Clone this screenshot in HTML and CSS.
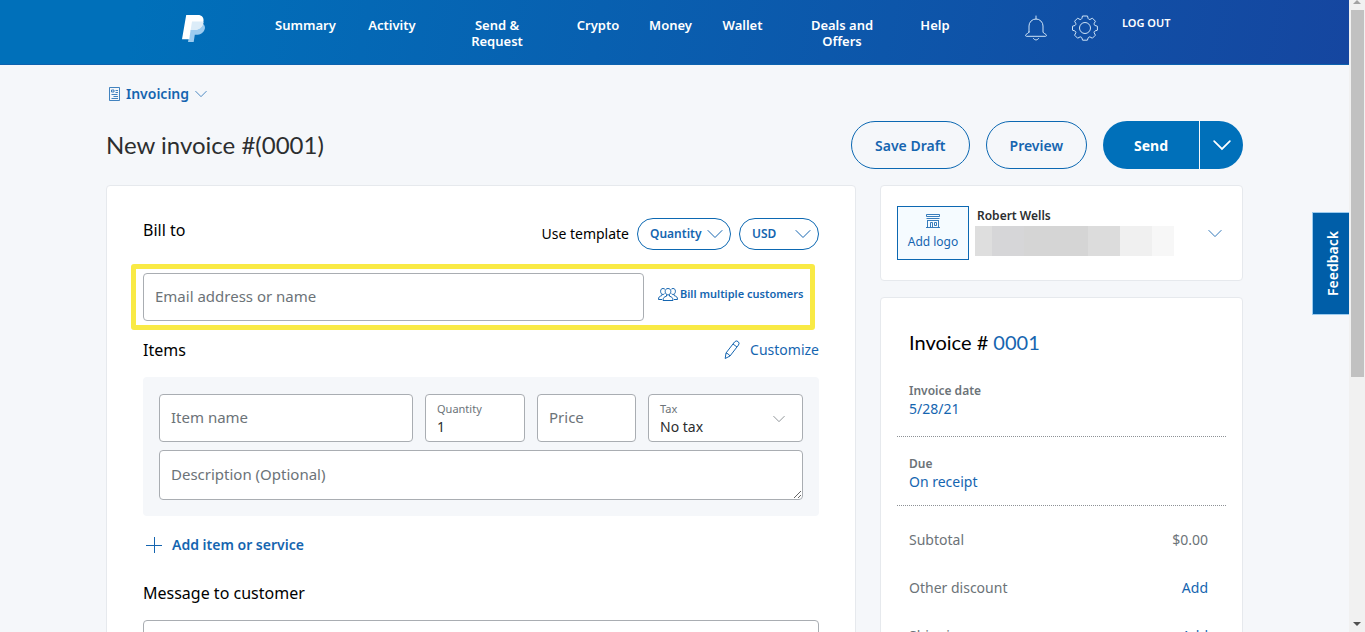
FILE: index.html
```html
<!DOCTYPE html>
<html lang="en">
<head>
<meta charset="utf-8">
<meta name="viewport" content="width=device-width, initial-scale=1">
<title>New invoice</title>
<link rel="stylesheet" href="styles.css">
</head>
<body>
<svg class="defs" aria-hidden="true">
  <symbol id="chevron" viewBox="0 0 16 10"><path d="M1 1.500 8 8.500 15 1.500" fill="none" stroke="currentColor" stroke-linecap="round"/></symbol>
</svg>
<div class="page">
  <header class="topbar">
    <div class="topbar-inner">
      <a class="logo" href="#" aria-label="PayPal">
        <svg width="24" height="28" viewBox="0 0 24 28">
          <path d="M9.500 7.500h8.500q5 1 5 5.500c-1 5-4.500 6.800-9 6.800h-1.200L11.700 27H6z" fill="#9bcbf0"/>
          <path d="M4.200 0h11.600c4.200 0 6.200 2.600 5.700 6.300-.9 6-4.600 8.700-9.800 8.700H8.600L7.300 24.300H0z" fill="#fff"/>
          <path d="M10 6.500h10.500c.5.200.9.500 1.100 1-1 5-4.500 7.500-9.900 7.500H8.700z" fill="#dcecf8"/>
        </svg>
      </a>
      <nav class="nav" aria-label="Main">
        <a href="#">Summary</a>
        <a href="#">Activity</a>
        <a href="#">Send &amp;<br>Request</a>
        <a href="#">Crypto</a>
        <a href="#">Money</a>
        <a href="#">Wallet</a>
        <a href="#">Deals and<br>Offers</a>
        <a href="#">Help</a>
      </nav>
      <div class="tools">
        <button class="icon-button" aria-label="Notifications">
          <svg width="24" height="26" viewBox="0 0 24 26" fill="none" stroke="currentColor" stroke-linecap="round" stroke-linejoin="round">
            <path d="M12 1v3M5 17V11a7 7 0 0 1 14 0v6c0 1.500 3.500 1.800 3.500 3.500 0 .5-.5.8-1 .8h-19c-.5 0-1-.3-1-.8C1.500 18.800 5 18.500 5 17zM9.500 23.500c.7 2 4.300 2 5 0"/>
          </svg>
        </button>
        <button class="icon-button" aria-label="Settings">
          <svg width="26" height="26" viewBox="0 0 26 26" fill="none" stroke="currentColor" stroke-linejoin="round">
            <circle cx="13" cy="13" r="5.500"/>
            <path d="M10.500 1h5l.7 2.600q.4.900 1.700.9l2.500-1.300 3 3-1.300 2.500q-.2 1.300.9 1.800l2.400.7v4l-2.500.8q-1 .6-.8 1.700l1.300 2.500-3 3-2.500-1.300q-1.200-.1-1.700.9l-.8 2.400h-4.800l-.8-2.500q-.6-1-1.700-.8l-2.500 1.300-3-3 1.300-2.500q.1-1.200-.9-1.700l-2.500-.8v-4l2.500-.7q1-.6.900-1.800L2.600 6.200l3-3 2.500 1.300q1.200.1 1.700-.9z"/>
          </svg>
        </button>
        <a class="logout" href="#">LOG OUT</a>
      </div>
    </div>
  </header>

  <main class="content">
    <button class="crumb">
      <svg class="doc" width="11" height="14" viewBox="0 0 11 14" fill="none" stroke="currentColor">
        <path d="M.5.5h10v13H.5zM2.500 3h2.500v2H2.500zM6.500 3.500h2.500M6.500 5.500h2.500M2.500 7.500h6M4.500 9.500h4.500M2.500 11.500h6.500"/>
      </svg>
      <span>Invoicing</span>
      <svg width="12" height="8"><use href="#chevron"/></svg>
    </button>

    <div class="title-row">
      <h1>New invoice #(0001)</h1>
      <div class="actions">
        <button class="btn">Save Draft</button>
        <button class="btn">Preview</button>
        <div class="split">
          <button class="send">Send</button>
          <button class="more" aria-label="More send options"><svg width="18" height="12"><use href="#chevron"/></svg></button>
        </div>
      </div>
    </div>

    <div class="columns">
      <section class="card form-card">
        <div class="bill-row">
          <h2>Bill to</h2>
          <label for="template">Use template</label>
          <div class="pill">
            <select id="template"><option>Quantity</option></select>
            <svg width="16" height="10"><use href="#chevron"/></svg>
          </div>
          <div class="pill pill-small">
            <select aria-label="Currency"><option>USD</option></select>
            <svg width="16" height="10"><use href="#chevron"/></svg>
          </div>
        </div>
        <div class="recipient">
          <input class="box" type="text" placeholder="Email address or name" aria-label="Email address or name">
          <a class="multi" href="#">
            <svg width="20" height="14" viewBox="0 0 20 14" fill="none" stroke="currentColor" stroke-linejoin="round">
              <path d="M10 1.500c2 0 2.800 1.300 2.800 3S11.600 8 10 8 7.200 6.200 7.200 4.500s.8-3 2.800-3zM8.500 8v1.200c-2.500.8-3.500 1.500-3.500 4.300h10c0-2.800-1-3.500-3.500-4.300V8M6.500 6.700C6 7.200 5.600 7.500 5 7.500 3.500 7.500 2.600 6 2.600 4.300S3.400 1.500 5 1.500c1 0 1.700.4 2 1M3.700 7.500v1.200C1.500 9.300.5 10 .5 12.500H4M13.500 6.700c.5.500.9.800 1.500.8 1.500 0 2.400-1.500 2.400-3.200S16.600 1.500 15 1.500c-1 0-1.700.4-2 1M16.300 7.500v1.200c2.200.6 3.200 1.300 3.200 3.800H16"/>
            </svg>
            <span>Bill multiple customers</span>
          </a>
        </div>
        <div class="items-head">
          <h2>Items</h2>
          <a class="customize" href="#">
            <svg width="16" height="20" viewBox="0 0 16 20" fill="none" stroke="currentColor" stroke-linejoin="round">
              <path d="M2 13 10.500 2q1.500-2 3.500-.5t.5 3.500L6 16l-4.800 2.500zM9 4l4 3M2 13q2.500.5 4 3"/>
            </svg>
            <span>Customize</span>
          </a>
        </div>
        <div class="item-panel">
          <input class="box" type="text" placeholder="Item name" aria-label="Item name">
          <div class="box field"><label for="qty">Quantity</label><input id="qty" type="text" value="1"></div>
          <input class="box" type="text" placeholder="Price" aria-label="Price">
          <div class="box field tax">
            <label for="tax">Tax</label>
            <select id="tax"><option>No tax</option></select>
            <svg width="12" height="8"><use href="#chevron"/></svg>
          </div>
          <textarea class="box description" rows="1" placeholder="Description (Optional)" aria-label="Description"></textarea>
        </div>
        <button class="add-item">
          <svg width="16" height="16" viewBox="0 0 16 16" stroke="currentColor"><path d="M8.500 0v16M0 8.500h16"/></svg>
          <span>Add item or service</span>
        </button>
        <h2><label for="message">Message to customer</label></h2>
        <textarea class="box message" id="message" rows="4"></textarea>
      </section>

      <aside class="side">
        <section class="card profile">
          <button class="add-logo">
            <svg width="14" height="14" viewBox="0 0 14 14" fill="none" stroke="currentColor">
              <path d="M.5.500h13v2H.5zM.5 4.500h13M1.500 6v7.500M12.500 6v7.500M0 13.500h14M4.500 13V8.500M6.500 13V8.500h-2M8.500 8.500h2v3h-2zM2 6.500h10" opacity=".85"/>
            </svg>
            <span>Add logo</span>
          </button>
          <div class="person">
            <strong>Robert Wells</strong>
            <div class="redacted"></div>
          </div>
          <button class="expand" aria-label="Show details"><svg width="14" height="9"><use href="#chevron"/></svg></button>
        </section>
        <section class="card summary">
          <h2>Invoice # <a href="#">0001</a></h2>
          <div class="detail"><span>Invoice date</span><a href="#">5/28/21</a></div>
          <div class="detail due"><span>Due</span><a href="#">On receipt</a></div>
          <dl class="totals">
            <dt>Subtotal</dt><dd>$0.00</dd>
            <dt>Other discount</dt><dd><a href="#">Add</a></dd>
            <dt>Shipping</dt><dd><a href="#">Add</a></dd>
          </dl>
        </section>
      </aside>
    </div>
  </main>
  <button class="feedback">Feedback</button>
</div>
<div class="scrollbar" aria-hidden="true">
  <svg width="16" height="10" viewBox="0 0 16 10"><path d="M4 4 8 0l4 4z" fill="#a3a3a3"/></svg>
  <div class="thumb"></div>
  <div class="track"></div>
  <svg width="16" height="16" viewBox="0 0 16 16"><path d="M4 6h8l-4 4z" fill="#505050"/></svg>
</div>
</body>
</html>
```
FILE: styles.css
```css
* { box-sizing: border-box; }

body {
  margin: 0;
  height: 100vh;
  overflow: hidden;
  display: grid;
  grid-template-columns: 1fr 16px;
  background: #f5f7fa;
  color: #000;
  font: 14px/20px "Noto Sans", "Open Sans", sans-serif;
}

button, input, select, textarea { font: inherit; color: inherit; }
button { padding: 0; border: 0; background: none; cursor: pointer; }
a { color: #1565b0; text-decoration: none; }
h1, h2, dl, dd { margin: 0; }
h2 { font-size: 16px; line-height: 24px; font-weight: 400; }
svg { display: block; flex: none; overflow: visible; }
.defs { position: absolute; width: 0; height: 0; }

.page { position: relative; overflow: hidden; min-width: 0; }

.topbar {
  min-height: 65px;
  background: linear-gradient(100deg, #0070ba 10%, #1546a0 100%);
  border-bottom: 1px solid #0d62af;
}
.topbar-inner {
  max-width: 992px;
  margin: 0 auto;
  padding-left: 3px;
  display: flex;
  align-items: flex-start;
}
.logo { width: 78px; padding-top: 15px; }
.nav {
  display: grid;
  grid-template-columns: 92px 81px 129px 73px 72px 72px 127px 59px;
  padding-top: 17px;
}
.nav a {
  color: #fff;
  font-size: 13px;
  line-height: 16px;
  font-weight: 600;
  text-align: center;
  white-space: nowrap;
}
.tools { margin-left: auto; display: flex; padding-top: 15px; }
.icon-button { color: #cfe4f7; margin-right: 24px; }
.logout { color: #fff; font-size: 11px; line-height: 16px; font-weight: 600; }

.content { max-width: 1137px; margin: 0 auto; }
.crumb {
  display: flex;
  align-items: center;
  gap: 6px;
  margin: 19px 0 17px 3px;
  color: #1565b0;
  font-weight: 600;
}
.doc { opacity: 0.8; }

.title-row { display: flex; justify-content: space-between; align-items: center; }
h1, .summary h2 { font-family: Lato, "Noto Sans", sans-serif; }
h1 { font-size: 24px; line-height: 32px; font-weight: 400; color: #2c2e2f; }
.actions { display: flex; gap: 16px; }
.btn {
  height: 48px;
  padding: 2px 23px 0;
  border: 1px solid #0c68b2;
  border-radius: 24px;
  color: #1565b0;
  font-weight: 600;
}
.split {
  display: grid;
  grid-template-columns: 96px 43px;
  gap: 1px;
  border-radius: 24px;
  overflow: hidden;
}
.split button { background: #0070ba; color: #fff; font-weight: 700; }
.split .send { padding-top: 2px; }
.more { display: grid; place-items: center; stroke-width: 1.5; }

.columns {
  display: grid;
  grid-template-columns: 1fr 363px;
  gap: 24px;
  margin-top: 16px;
}
.card { background: #fff; border: 1px solid #e6e9ed; border-radius: 4px; }
.form-card { padding: 32px 36px; min-height: 640px; }

.bill-row { display: flex; align-items: center; gap: 8px; }
.bill-row h2 { margin-right: auto; align-self: flex-start; }
.pill { display: grid; width: 94px; color: #1565b0; font-size: 12px; align-items: center; }
.pill-small { width: 80px; }
.pill > * { grid-area: 1 / 1; }
.pill svg { justify-self: end; margin-right: 8px; pointer-events: none; }
select { appearance: none; background: none; }
.pill select {
  height: 32px;
  padding: 0 12px;
  border: 1px solid #0c68b2;
  border-radius: 16px;
  font-weight: 600;
}

.recipient {
  position: relative;
  margin-top: 23px;
  display: grid;
  grid-template-columns: 1fr 161px;
  gap: 14px;
}
.recipient::after {
  content: "";
  position: absolute;
  inset: -9px 4px -9px -12px;
  border: 5px solid #f9ea45;
  border-radius: 3px;
  pointer-events: none;
}
.box {
  width: 100%;
  height: 48px;
  padding: 0 11px;
  border: 1px solid #a9adb2;
  border-radius: 4px;
  background: #fff;
  color: #2c2e2f;
  font-size: 15px;
}
input.box { padding-bottom: 2px; }
::placeholder { color: #6c7378; opacity: 1; }
.multi {
  display: flex;
  gap: 2px;
  align-items: center;
  align-self: start;
  margin-top: 11px;
  font-size: 11px;
  font-weight: 600;
  white-space: nowrap;
}

.items-head { display: flex; justify-content: space-between; align-items: center; margin-top: 17px; }
.customize { display: flex; gap: 10px; align-items: center; }
.item-panel {
  margin-top: 15px;
  padding: 17px 16px 16px;
  display: grid;
  grid-template-columns: 254fr 100fr 99fr 155fr;
  gap: 8px 12px;
  background: #f5f7fa;
  border-radius: 4px;
}
.field { display: grid; grid-template-rows: 16px 20px; align-content: start; padding-top: 6px; }
.field label { color: #6c7378; font-size: 11px; line-height: 16px; }
.field input, .field select {
  width: 100%;
  border: 0;
  padding: 0;
  outline: 0;
  background: none;
  font-size: 14px;
  line-height: 20px;
}
.tax { grid-template-columns: 1fr 18px; }
.tax svg { grid-area: 1 / 2 / 3 / 3; align-self: center; color: #6c7378; }
.description { grid-column: 1 / -1; height: 50px; padding-top: 13px; resize: both; }
.add-item {
  display: flex;
  align-items: center;
  gap: 10px;
  margin: 19px 0 26px 3px;
  color: #1565b0;
  font-weight: 600;
}
.message { height: 120px; margin-top: 15px; }

.side { display: grid; gap: 16px; align-content: start; }
.profile { display: flex; min-height: 96px; padding: 20px 20px 20px 16px; }
.add-logo {
  width: 72px;
  height: 54px;
  border: 1px solid #0c68b2;
  background: #f5fbff;
  color: #1565b0;
  font-size: 12px;
  display: grid;
  justify-items: center;
  align-content: center;
  gap: 4px;
}
.person { margin-left: 6px; width: 199px; font-size: 12px; line-height: 20px; }
.person strong { color: #2c2e2f; padding-left: 2px; font-weight: 600; }
.redacted {
  height: 30px;
  background: linear-gradient(90deg, #dedede 17px, #d6d6d8 17px 49px, #d5d5d5 49px 113px, #dcdcdc 113px 145px, #f0f0f0 145px 177px, #f7f7f7 177px);
}
.expand { margin-left: auto; align-self: center; color: #1565b0; }

.summary { min-height: 500px; padding: 31px 16px 0; }
.summary h2 { font-size: 20px; line-height: 26px; padding-left: 12px; margin-bottom: 27px; }
.detail {
  display: grid;
  padding: 0 12px 18px;
  border-bottom: 1px dotted #8d9196;
  line-height: 18px;
}
.detail span { color: #6c7378; font-size: 12px; font-weight: 600; }
.due { padding-top: 18px; padding-bottom: 14px; }
.totals {
  display: grid;
  grid-template-columns: 1fr auto;
  row-gap: 28px;
  padding: 24px 18px 0 12px;
  color: #6c7378;
}
.totals dd { text-align: right; }

.feedback {
  position: absolute;
  right: 0;
  top: 212px;
  width: 37px;
  height: 103px;
  border: 1px solid #9ccbee;
  border-left: 0;
  background: #005ea8;
  color: #fff;
  font-weight: 600;
  display: grid;
  place-items: center;
  padding-right: 4px;
  writing-mode: vertical-rl;
  transform: rotate(180deg);
}

.scrollbar {
  display: grid;
  grid-template-rows: 10px 367fr 239fr 16px;
  background: #f1f1f1;
}
.thumb { background: #c1c1c1; margin: 0 1px 0 2px; }
```
